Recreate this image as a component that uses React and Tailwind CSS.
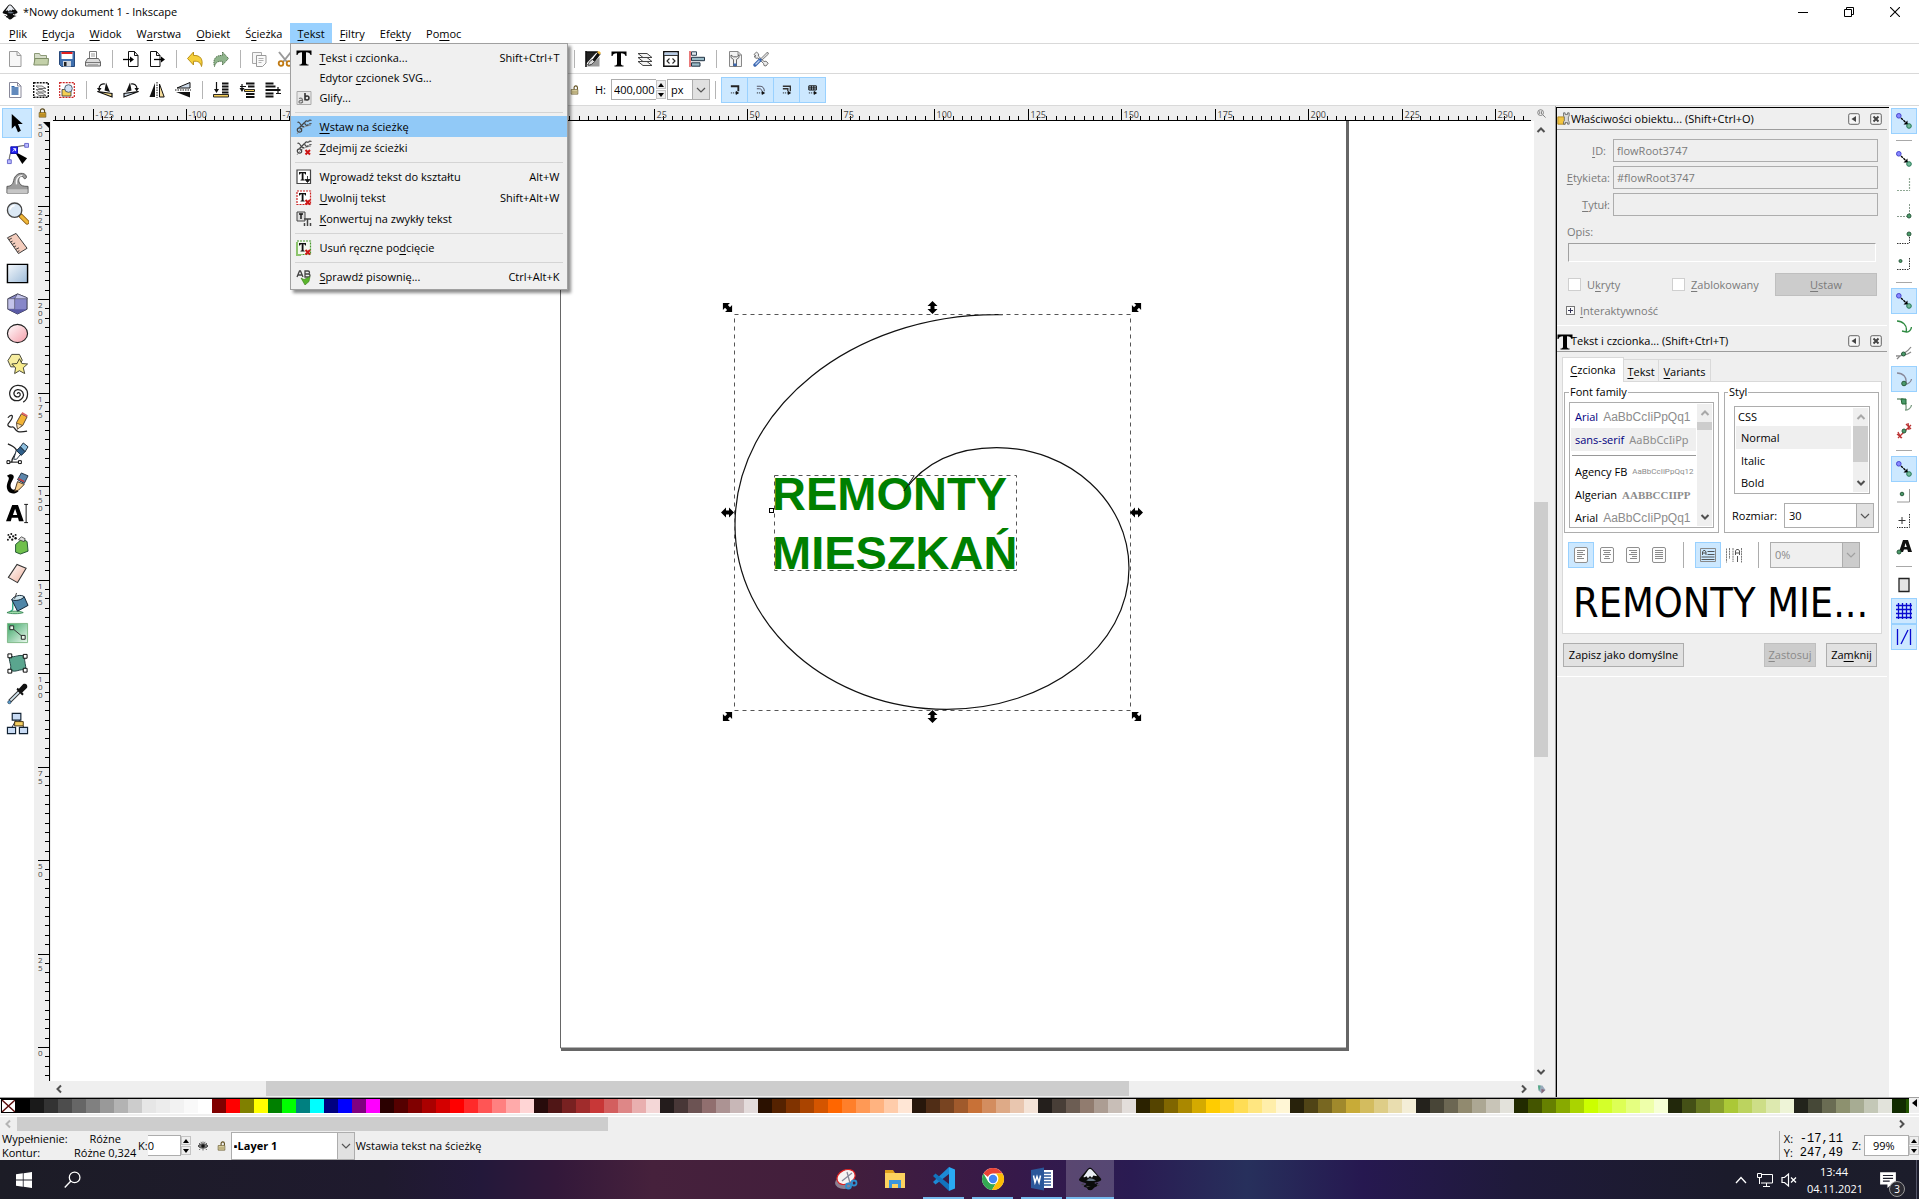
import React from "react";

const SEGOE = "font-['Open_Sans','Noto_Sans',sans-serif]";

/* ---------- small helpers ---------- */

function Svg({ box = 16, className = "w-4 h-4", children }) {
  return (
    <svg viewBox={`0 0 ${box} ${box}`} className={`${className} shrink-0`} fill="none" aria-hidden="true">
      {children}
    </svg>
  );
}

/* "_" marks the mnemonic letter that follows it */
function Mn({ t }) {
  const i = t.indexOf("_");
  if (i < 0) return <span>{t}</span>;
  return (
    <span>
      {t.slice(0, i)}
      <span className="underline underline-offset-2">{t[i + 1]}</span>
      {t.slice(i + 2)}
    </span>
  );
}

function Chevron({ dir = "down", color = "#505050", className = "" }) {
  const d = {
    down: "M1.5 3 5 6.5 8.5 3",
    up: "M1.5 7 5 3.500 8.5 7",
    left: "M7 1.500 3.500 5 7 8.500",
    right: "M3 1.500 6.500 5 3 8.500",
  }[dir];
  return (
    <svg viewBox="0 0 10 10" className={`h-[10px] w-[10px] shrink-0 ${className}`} fill="none" aria-hidden="true">
      <path d={d} stroke={color} strokeWidth="2" />
    </svg>
  );
}

function Combo({ label, value, className = "", textClass = "pl-2", disabled = false, arrow = "w-[18px]" }) {
  return (
    <div className={`relative ${className}`}>
      <select
        aria-label={label}
        disabled={disabled}
        defaultValue={value}
        className={`h-full w-full appearance-none border border-[#adadad] outline-none ${textClass} ${
          disabled ? "bg-[#efefef] text-[#8a8a8a] opacity-100" : "bg-white text-black"
        }`}
      >
        <option>{value}</option>
      </select>
      <span
        className={`pointer-events-none absolute inset-y-0 right-0 flex items-center justify-center border border-[#adadad] ${arrow} ${
          disabled ? "bg-[#cccccc]" : "bg-[#e1e1e1]"
        }`}
      >
        <svg viewBox="0 0 10 10" className="h-[10px] w-[10px]" fill="none" aria-hidden="true">
          <path d="M1 3l4 4 4-4" stroke={disabled ? "#a0a0a0" : "#555"} strokeWidth="1.200" />
        </svg>
      </span>
    </div>
  );
}

function Spin() {
  return (
    <span className="flex w-[10px] flex-col gap-px self-stretch py-px">
      <button aria-label="Więcej" className="flex flex-1 items-center justify-center border border-[#c4c4c4] bg-[#eee]">
        <svg viewBox="0 0 6 4" className="h-1 w-[6px]" aria-hidden="true"><path d="M3 0l3 4H0z" fill="#000" /></svg>
      </button>
      <button aria-label="Mniej" className="flex flex-1 items-center justify-center border border-[#c4c4c4] bg-[#eee]">
        <svg viewBox="0 0 6 4" className="h-1 w-[6px]" aria-hidden="true"><path d="M3 4l3-4H0z" fill="#000" /></svg>
      </button>
    </span>
  );
}

const VSep = ({ className = "" }) => (
  <span className={`flex w-[10px] shrink-0 justify-center ${className}`}>
    <span className="h-[18px] w-px bg-[#b4b4b4]" />
  </span>
);

/* ---------- logos ---------- */

function InkscapeLogo({ className = "h-4 w-4" }) {
  return (
    <svg viewBox="0 0 32 32" className={`${className} shrink-0`} aria-hidden="true">
      <path d="M16 1c1.500 0 2.500.8 3.800 2.200L30 14.500c2.200 2.500.5 4.300-3 5-2.500.6-5 .5-5 1.700 0 1.300 4 1.300 4 3 0 1.600-2.600 2-4.200 3.200-1.300 1-2.400 3.600-5.800 3.600-3.200 0-3-2.600-5-3.600-1.600-.8-3.400-.7-3.400-2 0-1.400 3.400-1.300 3.400-2.700 0-1.700-4-2-6.600-3C1 18.500.5 17 2.600 14.500L12.200 3.200C13.500 1.800 14.500 1 16 1z" fill="#0b0b0b" />
      <path d="M16 2.600c1 0 1.800.6 2.600 1.500l6 6.700c1 1.200.2 1.600-1 1.300l-3-.9-2 3-2.600-2.200-2.800 3-1.800-2.600-2.600 1.200c-1.200.5-2 .1-1-1.200l5.600-8.200C14.200 3.200 15 2.600 16 2.600z" fill="#e9edf3" />
      <path d="M15 15c4 0 7 2 9 3-4 1-9 1-13 0z" fill="#8fa3bb" opacity=".7" />
      <path d="M4 23l3-1 1.500 1-2 1.200zM26 23.500l3 .2-1 1.300-2 .2zM11 25l6 1-5 1z" fill="#444" />
      <path d="M24 21c2 0 3 .4 3 .9s-2 .6-3.500.4z" fill="#0b0b0b" />
    </svg>
  );
}

/* ---------- command bar icons ---------- */

const Ic = {
  fileNew: <Svg><path d="M2.500.500h8l3.500 4v11h-11.500z" fill="#f7f7f7" stroke="#9a9a9a" /><path d="M10 .500v4h4" stroke="#9a9a9a" /></Svg>,
  open: <Svg><path d="M1.500 14V2.500h5l1 2h6V7" fill="#d5dcc8" stroke="#8c9a78" /><path d="M.8 14l1.200-6.500h13.500l-.5 6.500z" fill="#c3d0a9" stroke="#7f8e68" /></Svg>,
  save: <Svg><path d="M.5.500h15v15h-13l-2-2z" fill="#3f6fae" stroke="#27487a" /><path d="M2.500 1h11v7h-11z" fill="#fff" /><path d="M2.500 1h11v2h-11z" fill="#e02020" /><path d="M4 10h8v5.500H4z" fill="#cfd6df" /><path d="M5 11h2.500v4H5z" fill="#222" /></Svg>,
  print: <Svg><path d="M4.500 7V.500h7V7" fill="#fff" stroke="#777" /><path d="M6 3h4M6 5h4" stroke="#999" /><path d="M2.500 7.500h11l2 3.500v4H.5v-4z" fill="#dcdcdc" stroke="#666" /><path d="M1 11.500h14" stroke="#777" /><path d="M3 13.500h10" stroke="#aaa" /></Svg>,
  imp: <Svg><path d="M5.500.500h6l3.500 4v11h-9.500z" fill="#fff" stroke="#111" /><path d="M11.500.500v4h3.500" stroke="#111" /><path d="M0 8.500h8" stroke="#000" strokeWidth="1.300" /><path d="M7 5.500l4 3-4 3z" fill="#000" /></Svg>,
  exp: <Svg><path d="M1.500.500h6l3.500 4v11h-9.500z" fill="#fff" stroke="#111" /><path d="M7.500.500v4h3.500" stroke="#111" /><path d="M5 8.500h8" stroke="#000" strokeWidth="1.300" /><path d="M12 5.500l4 3-4 3z" fill="#000" /></Svg>,
  undo: <Svg><path d="M6.500 1v3.500c7-.5 10 4 8 11-.8-4-3.500-5.700-8-5.200v3.700L.5 7.500z" fill="#f5cf3a" stroke="#b9901a" /></Svg>,
  redo: <Svg><path d="M9.500 1v3.500c-7-.5-10 4-8 11 .8-4 3.500-5.700 8-5.200v3.700l6-6.500z" fill="#8fb48c" stroke="#55754f" strokeDasharray="1.500 .7" /></Svg>,
  copy: <Svg><path d="M1.500 1.500h9v11h-9z" fill="#f6f6f6" stroke="#a8a8a8" /><path d="M5.500 4.500h9.500v7.500l-3.500 3.500h-6z" fill="#fafafa" stroke="#9a9a9a" /><path d="M7.500 7.500h5M7.500 9.500h5M7.500 11.500h3" stroke="#b0b0b0" /></Svg>,
  cut: <Svg><path d="M2 1l8 10M14 1L6 11" stroke="#9a9a9a" strokeWidth="2" /><circle cx="4" cy="12.500" r="2.300" stroke="#c07a14" strokeWidth="1.800" /><circle cx="12" cy="12.500" r="2.300" stroke="#c07a14" strokeWidth="1.800" /></Svg>,
  fill: <Svg><path d="M1 1h11L1 13z" fill="#222" /><path d="M1 1h12M1 0v16" stroke="#111" strokeWidth="1.600" /><path d="M1.500 15.500L14.500 6v9.500z" fill="#9a9a9a" /><path d="M3 13l8-9 3 2.500-7 7z" fill="#fff" /><path d="M2.500 14c1.500-1.500 2-4.500 5-5.500l2 2c-1.500 2.500-4 4-7 3.500z" fill="#ddd" stroke="#111" strokeWidth=".8" /><path d="M7.500 8.500L13 1l2.700 2-5.700 7.500z" fill="#111" /><path d="M12 1l2-1 2 2-1.500 1.800z" fill="#f0b83a" /></Svg>,
  text: <Svg><path d="M.5.500h15v4.500h-1c-.5-2-1.500-2.800-4.500-2.800v10.300c0 1.500.6 2 2.500 2v1h-9v-1c1.900 0 2.500-.5 2.500-2V2.200c-3 0-4 .8-4.500 2.800h-1z" fill="#000" /></Svg>,
  layers: <Svg><path d="M1 10.500h9l5 4H6zM1 6.500h9l5 4H6zM1 2.500h9l5 4H6z" fill="#f3f3f3" stroke="#444" strokeLinejoin="round" /></Svg>,
  xml: <Svg><path d="M.8.800h14.400v14.400H.8z" fill="#fff" stroke="#111" strokeWidth="1.500" /><path d="M1.500 1.500h13v3h-13z" fill="#b5c9e3" /><path d="M1 4.500h14" stroke="#333" /><path d="M6.500 7.500L4 10l2.500 2.500M9.500 7.500L12 10l-2.500 2.500" stroke="#222" strokeWidth="1.100" /></Svg>,
  align: <Svg><path d="M1 0v16" stroke="#d22" strokeWidth="1.200" /><path d="M2.500.800h5v3.500h-5z" fill="#dfe8ee" stroke="#345" /><path d="M2.500 6.300h13v3.400h-13zM2.500 11.800h8.500v3.400h-8.500z" fill="#9bbcc8" stroke="#234" /></Svg>,
  docPrefs: <Svg><path d="M2.500.500h8.500l3.500 3.500v11.500h-12z" fill="#f3f3f3" stroke="#888" /><path d="M11 .500v3.500h3.500" stroke="#888" /><path d="M4 4v2.500l2.500 2V15h3V8.500L12 6.500V4l-2.300 1.800H6.300z" fill="#eee" stroke="#555" strokeWidth=".9" /><path d="M6.500 12.500h3V15h-3z" fill="#3a66b0" /></Svg>,
  prefs: <Svg><path d="M1 3.500L3.500 1l2.200 2-.4 2L11 10.500l2-.3 2.200 2L13 15l-2-.5-.4-2L5 7l-2 .3L1 5.500l2-.5z" fill="#ececec" stroke="#666" strokeWidth=".9" /><path d="M14.500 1L15.500 3 9 9 8 7.500z" fill="#ddd" stroke="#666" strokeWidth=".8" /><path d="M7 9l-5 5" stroke="#3a66b0" strokeWidth="3.400" strokeLinecap="round" /><path d="M6.500 9.500L2.500 13.500" stroke="#bcd0f0" strokeWidth="1.300" /></Svg>,
};

const TC = {
  selAll: <Svg><path d="M2.500.500h8l3.500 3.500v11.500h-11.500z" fill="#fff" stroke="#889" /><path d="M10.500.500v3.500h3.500" stroke="#889" /><path d="M4.500 6h7M4.500 8h7M4.500 10h7M4.500 12h7" stroke="#2f64a8" strokeWidth="1.300" /><path d="M4.500 4h3v1h-3z" fill="#2f64a8" /></Svg>,
  selLayers: <Svg><path d="M.7.700h14.600v14.600H.7z" stroke="#111" strokeWidth="1.400" strokeDasharray="2 1" /><path d="M3 11h6l4 2.500H6zM3 7.500h6l4 2.500H6zM3 4h6l4 2.500H6z" fill="#eee" stroke="#555" strokeWidth=".8" /></Svg>,
  desel: <Svg><path d="M.7.700h14.600v14.600H.7z" stroke="#c22" strokeWidth="1.200" strokeDasharray="2 1" /><path d="M3 7.500h9V14H3z" fill="#f3cf52" stroke="#333" strokeWidth=".8" /><circle cx="9.500" cy="6.500" r="3.800" fill="#cfe0f3" stroke="#456" strokeWidth=".9" /></Svg>,
  rotL: <Svg><path d="M2 7c0-4 3-5.500 6-5" stroke="#111" strokeWidth="1.200" /><path d="M0 6h4.500L2.300 9.500z" fill="#111" /><path d="M9 .500L13 10 7.500 8.500z" fill="#111" /><path d="M.5 9.500l14.500 2v3.500z" fill="#f2d98a" stroke="#111" strokeWidth="1.200" /></Svg>,
  rotR: <Svg><path d="M14 7c0-4-3-5.500-6-5" stroke="#111" strokeWidth="1.200" /><path d="M16 6h-4.500l2.200 3.500z" fill="#111" /><path d="M7 .500L3 10l5.500-1.500z" fill="#111" /><path d="M15.500 9.500L1 11.500v3.500z" fill="#cfdcea" stroke="#111" strokeWidth="1.200" /></Svg>,
  flipH: <Svg><path d="M6 1v14H.5z" fill="#111" /><path d="M8 0v16" stroke="#111" strokeDasharray="1.500 1" /><path d="M10.500 2v13h4.700z" fill="#f5dc9a" stroke="#111" /></Svg>,
  flipV: <Svg><path d="M15 6H2l13-5.500z" fill="#cfdcea" stroke="#111" /><path d="M0 8h16" stroke="#111" strokeDasharray="1.500 1" /><path d="M15 10v5.500L1 10z" fill="#111" /></Svg>,
  lower: <Svg><path d="M9 1.500h6.500M9 4.500h6.500M9 7.500h6.500M9 10.500h6.500" stroke="#111" strokeWidth="2" /><path d="M.5 12.500h15v2.500H.5z" fill="#f4cd5a" stroke="#111" strokeWidth=".9" /><path d="M3.500 0v8" stroke="#111" strokeWidth="1.200" /><path d="M1 7h5l-2.500 4z" fill="#111" /></Svg>,
  lower1: <Svg><path d="M7 1.500h8.500M9 4.500h6.500M7 12h8.500M7 15h8.500" stroke="#111" strokeWidth="2" /><path d="M5.500 7.500h10v2h-10z" fill="#f4cd5a" stroke="#111" strokeWidth=".9" /><path d="M1 4.500h6M3 2v5" stroke="#111" strokeWidth="1.200" /><path d="M.5 6h5L3 10z" fill="#111" /></Svg>,
  raise: <Svg><path d="M.5 1.500h8M.5 4.500h10M.5 11.500h8M.5 14.500h8" stroke="#111" strokeWidth="2" /><path d="M.5 7h15v2H.5z" fill="#111" /><path d="M13 5v7M11 11.500h5" stroke="#111" strokeWidth="1.200" /></Svg>,
  top: <Svg><path d="M.5 5.500h8M.5 8.500h8M.5 11.500h8M.5 14.500h8" stroke="#111" strokeWidth="2" /><path d="M.5.500h15v2.500H.5z" fill="#f4cd5a" stroke="#111" strokeWidth=".9" /></Svg>,
};

const Lock = ({ open }) => (
  <svg viewBox="0 0 10 12" className="h-[10px] w-[9px] shrink-0" fill="none" aria-hidden="true">
    <path d={open ? "M4.500 5.500V3a2 2 0 0 1 4 0V5.500" : "M2.500 6V3.500a2.500 2.500 0 0 1 5 0V6"} stroke="#5b4a1a" strokeWidth="1.300" />
    <path d="M1 5.500h8V11H1z" fill={open ? "#e9e2b8" : "#e3a92a"} stroke="#5b4a1a" strokeWidth=".8" />
    <path d="M2 7.500h6M2 9.300h6" stroke="#7a6120" strokeWidth=".6" />
  </svg>
);

/* scale strokes / corners / gradients / patterns toggles */
const Affect = ({ kind }) => (
  <Svg className="h-[10px] w-[10px]" box={12}>
    {kind === 0 && <path d="M1 1.500h9v6" stroke="#222" strokeWidth="2.200" />}
    {kind === 1 && <path d="M1 1.500h4c3 0 5 2 5 6M1 4.500h3c2 0 3 1 3 3" stroke="#556" strokeWidth="1.200" />}
    {kind === 2 && <path d="M1 1.500h9v6M1 4.500h6v3" stroke="#333" strokeWidth="1.600" />}
    {kind === 3 && <path d="M1 1h9v5H1zM1 3.500h9M4 1v5M7 1v5" stroke="#111" strokeWidth="1.200" />}
    <path d="M1 9.500h6" stroke="#111" strokeDasharray="1.500 1" />
    <path d="M7 7l4 2.500L7 12z" fill="#111" />
  </Svg>
);

/* ---------- toolbox ---------- */

const TOOLS = [
  ["Zaznaczanie", <path key="a" d="M6 2l11.500 10.500h-5l3 7-3 1.500-3-7L6 17.500z" fill="#000" />],
  ["Edycja węzłów", <g key="a"><path d="M3.500 20C3 10 8 4 20 3.500" stroke="#777" strokeWidth="1.300" /><path d="M9 10l13 7-5 6z" fill="#000" /><path d="M5 5h7v7H5z" fill="#2222f0" stroke="#11a" /><path d="M7 10l3-3M7.500 7H10v2.500" stroke="#fff" /><path d="M1.500 18.500h4v4h-4zM19.500 1.500h4v4h-4z" fill="#bbf" stroke="#66c" /></g>],
  ["Ulepszanie", <g key="a"><path d="M1 22v-7c3 0 6-1 7-6C9 3 14 0 19 2c3 1.500 3 5 .5 5-1.500 0-1-2.500-3-2.500-3 0-4 4-2.500 7 1.500 3 4 3.500 9 3.500v7z" fill="#9c9c9c" stroke="#555" /><path d="M1.500 18h21v4h-21z" fill="#c6c6c6" /><path d="M11 13c-1-5 1-9 6-9.500" stroke="#f4f4f4" strokeWidth="1.500" /></g>],
  ["Powiększenie", <g key="a"><path d="M15 14l7 7" stroke="#8a5a10" strokeWidth="5" strokeLinecap="round" /><path d="M16 15l6 6" stroke="#f0b83a" strokeWidth="3" strokeLinecap="round" /><circle cx="9" cy="8.500" r="7.500" fill="#dce9f5" stroke="#444" strokeWidth="1.400" /><path d="M4.500 8A4.500 4.500 0 0 1 9 4" stroke="#fff" strokeWidth="1.500" /></g>],
  ["Pomiar", <g key="a"><path d="M1.500 6l9-4.500 11.500 15.500-9 5.500z" fill="#f4cdbd" stroke="#333" /><path d="M3 8l3-1.500M4.800 10.500l2-1M6.500 13l3-1.500M8.500 15.500l2-1M10.500 18l3-1.500M12 20.500l2-1" stroke="#333" /></g>],
  ["Prostokąt", <path key="a" d="M1.500 2.500h21v19h-21z" fill="url(#blueGrad)" stroke="#000" strokeWidth="1.500" />],
  ["Obiekt 3D", <g key="a"><path d="M2 7l10-5 10 4v12l-10 5-10-5z" fill="#8787c9" stroke="#334" /><path d="M2 7l7 0v11L2 18zM9 7l3-5 10 4v1z" fill="#c3c3ea" stroke="#445" strokeWidth=".6" /><path d="M9 18l13 0-10 5-10-5z" fill="#5a5aa5" /></g>],
  ["Elipsa", <ellipse key="a" cx="12" cy="12" rx="10.500" ry="9.500" fill="url(#pinkGrad)" stroke="#222" strokeWidth="1.200" />],
  ["Gwiazda", <g key="a"><path d="M2 9l4-6.500h8l3 6-4 7H5z" fill="#f6eda0" stroke="#443" /><path d="M14 7l2.500 5 6 .5-4.500 4 1.500 6-5.500-3-5 3 1-6-4-4 5.500-.5z" fill="#f8ec8c" stroke="#443" /></g>],
  ["Spirala", <path key="a" d="M12 12.500c-.5-1.500 2.200-2 2.800 0 .6 2.500-2.600 4-4.800 2.500C7 13 8 8.500 12 8c5-.4 7.500 4.500 5.500 8-3 5-10.500 4.500-12.800-.2C2 10 6 4 12 3.500c6-.3 10.500 3.500 10.500 9 0 4-2 7-4.500 8.500" stroke="#222" strokeWidth="1.300" />],
  ["Ołówek", <g key="a"><path d="M2 6c3-4 6-3 4 1S0 13 3 15s4-1 6 2 3 5 13 3" stroke="#222" strokeWidth="1.300" /><path d="M11 11L16 2l6 3-4.500 9-5.500 3.500z" fill="#f3b436" stroke="#543" /><path d="M11 11.500l6 2.500-5 4z" fill="#fbe3b5" stroke="#543" strokeWidth=".8" /><path d="M16 2l6 3 .7-1.500L17 0z" fill="#d66" /></g>],
  ["Pióro", <g key="a"><path d="M2 2c4 2 8 3 9 7 0 4-5 6-5 12" stroke="#222" strokeWidth="1.300" /><path d="M8 18l3-10 5 4-5 6z" fill="#fff" stroke="#234" /><path d="M11 9l4-4 5 5-4 4z" fill="#2f5f8a" stroke="#123" /><path d="M15 5l3-4 5 4-3 5z" fill="#8fc0e0" stroke="#123" /><path d="M4 21h10" stroke="#000" /><path d="M1 19.500h3v3H1zM13 19.500h3v3h-3z" fill="#fff" stroke="#000" /></g>],
  ["Kaligrafia", <g key="a"><path d="M1 4c3-3 8-2 7 2-1 3-4 6-3 10 1 3 4 3 6 1l2 3c-4 4-11 3-12-3C0 11 5 7 2 5z" fill="#000" /><path d="M9 20l3-10 7 3-6 6z" fill="#f7cf8a" stroke="#432" /><path d="M12 8l4-7 7 3-4 8z" fill="#5d86ab" stroke="#234" /><path d="M13 7l6 3" stroke="#c33" strokeWidth="1.500" /></g>],
  ["Tekst", <g key="a"><path d="M6.500 3h6l6 17h-5l-1-3.500H6L5 20H0zM9.500 7l-2.300 6.500h4.500z" fill="#000" fillRule="evenodd" /><path d="M19 2.500h4M21 2.500v19M19 21.500h4" stroke="#111" /></g>],
  ["Sprej", <g key="a"><path d="M10 13l7-6 5 3 1 10-8 3-5-2z" fill="#6fc04c" stroke="#253" /><path d="M13 8l3-3 4 2-1 3z" fill="#ddd" stroke="#333" strokeWidth=".8" /><g fill="#111"><circle cx="2.500" cy="3" r="1" /><circle cx="5.500" cy="2" r="1" /><circle cx="4" cy="5.500" r="1.200" /><circle cx="7.500" cy="4.500" r="1.200" /><circle cx="2" cy="8" r="1" /><circle cx="6.500" cy="8" r="1.200" /><circle cx="10" cy="6.500" r="1.300" /><circle cx="10" cy="3" r="1" /></g></g>],
  ["Gumka", <path key="a" d="M2.500 16L11.500 2.500l9.500 4-9 15z" fill="url(#pinkGrad2)" stroke="#333" strokeWidth="1.100" />],
  ["Wiadro", <g key="a"><path d="M4 21c2-2 3-2 3-3s0-8 1-11" stroke="#3a8" strokeWidth="1.500" /><path d="M1 21.500c3-2 14-2 17 0-3 1.500-14 1.500-17 0z" fill="#9cdca8" stroke="#274" strokeWidth=".8" /><path d="M6 8l13-3 4 9-11 6z" fill="#4f86a8" stroke="#123" /><path d="M6 8c2-4 10-6 13-3-2 3-9 5-13 3z" fill="#cfe6ee" stroke="#123" /><path d="M9 7l2-6" stroke="#333" /></g>],
  ["Gradient", <g key="a"><path d="M1.500 1.500h21v20h-21z" fill="url(#greenGrad)" stroke="#7fb887" /><path d="M6 6l12 10" stroke="#333" /><path d="M4 4h4v4H4zM16 14h4v4h-4z" fill="#e8f6ea" stroke="#222" /></g>],
  ["Siatka gradientu", <g key="a"><path d="M4 4c5 3 10-3 16 1-2 5 2 9 0 14-6-2-9 3-16 0 3-5-2-9 0-15z" fill="#5aa58e" stroke="#244" /><path d="M2 2h4v4H2zM18 2.500h4v4h-4zM2 18h4v4H2zM18 17h4v4h-4z" fill="#fff" stroke="#000" /></g>],
  ["Pipeta", <g key="a"><path d="M4 20l10-10" stroke="#333" strokeWidth="4" /><path d="M4.500 19.500l9-9" stroke="#d4e6f0" strokeWidth="2" /><path d="M11 8l6 6 1.500-1.500L17 11l5-5c1-3-1-5-4-4l-4.500 5L12 6z" fill="#111" /><circle cx="3.500" cy="21" r="1.700" fill="#5a9fd0" stroke="#234" strokeWidth=".6" /></g>],
  ["Łącznik", <g key="a"><path d="M12 6L5 18M12 6l8 12" stroke="#223" /><path d="M6.500 1.500h9v7h-9zM1.500 16h8.500v6.500H1.500zM14 16h8.500v6.500H14z" fill="#c9dcf5" stroke="#123" strokeWidth="1.200" /><path d="M9 10h9v4.500H9z" fill="#f5cf62" stroke="#431" /></g>],
];

function Toolbox() {
  return (
    <nav aria-label="Narzędzia" className="flex w-[34px] shrink-0 flex-col items-center bg-white pt-[2px]">
      <svg className="absolute h-0 w-0" aria-hidden="true">
        <defs>
          <linearGradient id="blueGrad" x1="0" y1="0" x2="1" y2="1"><stop offset="0" stopColor="#f4f8fc" /><stop offset="1" stopColor="#9dbbd9" /></linearGradient>
          <linearGradient id="pinkGrad" x1="0" y1="0" x2="1" y2="1"><stop offset="0" stopColor="#fff" /><stop offset="1" stopColor="#f59ca8" /></linearGradient>
          <linearGradient id="pinkGrad2" x1="0" y1="0" x2="1" y2="1"><stop offset="0" stopColor="#fff" /><stop offset="1" stopColor="#f0b09c" /></linearGradient>
          <linearGradient id="greenGrad" x1="0" y1="0" x2="1" y2="1"><stop offset="0" stopColor="#3aa565" /><stop offset="1" stopColor="#effaf1" /></linearGradient>
        </defs>
      </svg>
      {TOOLS.map(([name, art], i) => (
        <button
          key={name}
          aria-label={name}
          className={`flex h-[30px] w-[30px] items-center justify-center ${i === 0 ? "border border-[#99d1ff] bg-[#cce8ff]" : ""}`}
        >
          <Svg box={24} className="h-[23px] w-[23px]">{art}</Svg>
        </button>
      ))}
    </nav>
  );
}

/* ---------- menu ---------- */

const glyph = (extra) => (
  <g>
    <path d="M1 15c3-5 5-7 14-9" stroke="#888" strokeWidth=".9" />
    <circle cx="3.500" cy="11" r="2.200" stroke="#444" strokeWidth="1.200" />
    <path d="M1.500 3.500c1.500-1 2.500 1 3.500 2.500s2 2 3 1.500M8.500 3.500L3.500 8.500" stroke="#444" strokeWidth="1.200" />
    <path d="M12 2.500c-2-1.500-4 .5-3 2.500s2.500 1.500 3.500.5M15.500 1.500c-2-1-3 0-2.700 1.200M13 5l2.500-.5" stroke="#444" strokeWidth="1.200" />
    {extra}
  </g>
);
const redX = <path d="M9.500 10l4.500 4.500M14 10l-4.500 4.500" stroke="#cc1414" strokeWidth="2" />;
const T_PATH = "M3 3h7v2.500h-.8C9 4.500 8.500 4.200 7.500 4.200v5.600c0 .7.400 1 1.200 1v.7H4.500v-.7c.8 0 1.200-.3 1.200-1V4.200c-1 0-1.500.3-1.700 1.300H3z";

const MENU = [
  { t: "_Tekst i czcionka...", k: "Shift+Ctrl+T", icon: Ic.text },
  { t: "Edytor _czcionek SVG...", small: true },
  { t: "Glify...", icon: <Svg><path d="M1 1.500h14v13H1z" fill="#e8e8e8" stroke="#aaa" /><path d="M3 8.500c2-1 3.500 0 3.500 1.500v3M6.500 10.500c-4-.5-4.500 2.500-2 2.500 1 0 2-1 2-1" stroke="#777" strokeWidth="1.200" /><path d="M9 3v7.500M9 7c1-1.500 4-1.500 4 1s-3 2.500-4 1" stroke="#333" strokeWidth="1.600" /></Svg> },
  null,
  { t: "_Wstaw na ścieżkę", sel: true, icon: <Svg>{glyph(null)}</Svg> },
  { t: "_Zdejmij ze ścieżki", icon: <Svg>{glyph(redX)}</Svg> },
  null,
  { t: "W_prowadź tekst do kształtu", k: "Alt+W", icon: <Svg><path d="M1 1h13.500v13.500H1z" fill="#fff" stroke="#444" strokeWidth="1.200" /><path d={T_PATH} fill="#111" /><path d="M11.500 7v6M9 10.500h5l-2.500 3z" stroke="#111" fill="#111" strokeWidth=".8" /></Svg> },
  { t: "_Uwolnij tekst", k: "Shift+Alt+W", icon: <Svg><path d="M1 1h13.500v13.500H1z" fill="#fff" stroke="#c22" strokeWidth="1.200" strokeDasharray="2 1" /><path d={T_PATH} fill="#111" />{redX}</Svg> },
  { t: "_Konwertuj na zwykły tekst", icon: <Svg><path d="M1 1h8v9H1z" fill="#ddd" stroke="#444" /><path d="M3 3h4M5 3v5" stroke="#111" strokeWidth="1.400" /><path d="M8 8h7M11.500 8v7M8.500 12v3M14.500 12v3" stroke="#444" strokeWidth="1.500" /></Svg> },
  null,
  { t: "Usuń ręczne po_dcięcie", icon: <Svg><path d="M1 1h13.500v13.500H1z" fill="#f3f9ee" stroke="#489a2c" strokeWidth="1.200" strokeDasharray="2 1" /><path d="M1 2v13h4" stroke="#8cc46c" strokeWidth="2" /><path d={T_PATH} fill="#111" />{redX}</Svg> },
  null,
  { t: "_Sprawdź pisownię...", k: "Ctrl+Alt+K", icon: <Svg><path d="M1 8l2.500-6h1L7 8M2 6h4M9 8V2h3c2 0 2 2.800 0 3H9h3.500c2 0 2 3 0 3z" stroke="#444" strokeWidth="1.300" /><path d="M5 9l3 1.500 6-3-1 5-4 3.500z" fill="#5ab52c" stroke="#387a18" strokeWidth=".6" /></Svg> },
];

function TextMenu() {
  return (
    <div role="menu" className="absolute left-0 top-full z-20 w-[278px] border border-[#a0a0a0] bg-[#f0f0f0] pb-[2px] pt-[3px] shadow-[3px_3px_3px_rgba(0,0,0,0.45)]">
      {MENU.map((m, i) =>
        m === null ? (
          <div key={i} role="separator" className="flex h-2 items-center px-1">
            <div className="h-px flex-1 bg-[#d4d4d4]" />
          </div>
        ) : (
          <button
            key={i}
            role="menuitem"
            className={`flex w-full items-center pl-[6px] pr-2 ${m.small ? "h-[19px]" : "h-[21px]"} ${m.sel ? "bg-[#91c9f7]" : ""}`}
          >
            <span className="flex w-[22px] justify-start">
              {m.icon ? <span className="flex h-[14px] w-[14px] items-center justify-center">{m.icon}</span> : null}
            </span>
            <Mn t={m.t} />
            <span className="ml-auto">{m.k}</span>
          </button>
        )
      )}
    </div>
  );
}

const MENUBAR = ["_Plik", "_Edycja", "_Widok", "W_arstwa", "_Obiekt", "Ś_cieżka", "_Tekst", "_Filtry", "Efe_kty", "Po_moc"];

function Header() {
  return (
    <header className="bg-white">
      <div className="flex h-[23px] items-center pl-[2px]">
        <InkscapeLogo className="h-4 w-4" />
        <h1 className="pl-[5px]">*Nowy dokument 1 - Inkscape</h1>
        <div className="ml-auto flex gap-9 pr-[19px]">
          <button aria-label="Minimalizuj"><Svg box={10} className="h-[10px] w-[10px]"><path d="M0 5.500h10" stroke="#000" /></Svg></button>
          <button aria-label="Przywróć"><Svg box={10} className="h-[10px] w-[10px]"><path d="M.5 2.500h7v7h-7zM2.500 2.500v-2h7v7h-2" stroke="#000" /></Svg></button>
          <button aria-label="Zamknij okno"><Svg box={10} className="h-[10px] w-[10px]"><path d="M0 0l10 10M10 0L0 10" stroke="#000" strokeWidth="1.100" /></Svg></button>
        </div>
      </div>
      <div role="menubar" className="flex h-[21px] gap-px border-b border-[#d9d9d9] pl-[2px]">
        {MENUBAR.map((m) => (
          <div key={m} className="relative">
            <button role="menuitem" className={`h-[21px] px-[7px] ${m === "_Tekst" ? "bg-[#99d1ff]" : ""}`}>
              <Mn t={m} />
            </button>
            {m === "_Tekst" && <TextMenu />}
          </div>
        ))}
      </div>
    </header>
  );
}

function IconBtn({ label, children, className = "" }) {
  return (
    <button aria-label={label} className={`flex h-[26px] w-[26px] shrink-0 items-center justify-center ${className}`}>
      {children}
    </button>
  );
}

function CommandBar() {
  const g = (list) => list.map(([l, ic]) => <IconBtn key={l} label={l}>{ic}</IconBtn>);
  return (
    <div role="toolbar" aria-label="Polecenia" className="flex h-[30px] items-center border-b border-[#d9d9d9] bg-white pl-[2px]">
      {g([["Nowy", Ic.fileNew], ["Otwórz", Ic.open], ["Zapisz", Ic.save], ["Drukuj", Ic.print]])}
      <VSep className="mx-px" />
      {g([["Importuj", Ic.imp], ["Eksportuj", Ic.exp]])}
      <VSep className="mx-px" />
      {g([["Cofnij", Ic.undo], ["Przywróć", Ic.redo]])}
      <VSep className="mx-px" />
      {g([["Kopiuj", Ic.copy], ["Wytnij", Ic.cut]])}
      <span className="w-[270px] shrink-0" />
      <VSep className="mx-px" />
      {g([["Wypełnienie i kontur", Ic.fill], ["Tekst i czcionka", Ic.text], ["Warstwy", Ic.layers], ["Edytor XML", Ic.xml], ["Wyrównaj", Ic.align]])}
      <VSep className="mx-px" />
      {g([["Ustawienia dokumentu", Ic.docPrefs], ["Preferencje", Ic.prefs]])}
    </div>
  );
}

function ToolControls() {
  const g = (list) => list.map(([l, ic]) => <IconBtn key={l} label={l}>{ic}</IconBtn>);
  return (
    <div role="toolbar" aria-label="Opcje narzędzia" className="flex h-8 items-center border-b border-[#d9d9d9] bg-white pl-[2px]">
      {g([["Zaznacz wszystko", TC.selAll], ["Zaznacz na warstwach", TC.selLayers], ["Odznacz", TC.desel]])}
      <VSep className="mx-px" />
      {g([["Obróć w lewo", TC.rotL], ["Obróć w prawo", TC.rotR], ["Odbij poziomo", TC.flipH], ["Odbij pionowo", TC.flipV]])}
      <VSep className="mx-px" />
      {g([["Na spód", TC.lower], ["Niżej", TC.lower1], ["Wyżej", TC.raise], ["Na wierzch", TC.top]])}
      <span className="w-[258px] shrink-0" />
      <button aria-label="Zablokuj proporcje"><Lock open /></button>
      <label htmlFor="sel-h" className="ml-4 w-4">H:</label>
      <span className="flex h-[21px]">
        <input id="sel-h" defaultValue="400,000" className="h-full w-[45px] border border-r-0 border-[#adadad] bg-white pl-[2px] outline-none" />
        <Spin />
      </span>
      <Combo label="Jednostka" value="px" className="ml-px h-[21px] w-[43px]" textClass="pl-[3px]" />
      <VSep />
      <span className="ml-px flex">
        {[0, 1, 2, 3].map((k) => (
          <IconBtn key={k} label={`Skalowanie ${k + 1}`} className="-mr-px w-[27px] border border-[#99d1ff] bg-[#cce8ff]">
            <Affect kind={k} />
          </IconBtn>
        ))}
      </span>
    </div>
  );
}

/* ---------- canvas ---------- */

const PX_PER_MM = 3.74;
const range = (a, b, s) => Array.from({ length: Math.floor((b - a) / s) + 1 }, (_, i) => a + i * s);

function HRuler() {
  const x = (mm) => Math.round(526 + mm * PX_PER_MM) + 0.5;
  return (
    <svg className="h-[15px] w-full bg-[#efefef]" aria-hidden="true">
      <path d="M19 14.500H1497" stroke="#000" strokeWidth="1" />
      {range(-135, 257.5, 2.5).map((mm) => (
        <path key={mm} d={`M${x(mm)} ${mm % 25 === 0 ? 3 : 10}V15`} stroke="#000" />
      ))}
      {range(-125, 250, 25).map((mm) => (
        <text key={mm} x={x(mm) + 2} y="12" fontSize="9" fill="#444">{mm}</text>
      ))}
    </svg>
  );
}

function VRuler() {
  const y = (mm) => Math.round(926 - mm * PX_PER_MM) + 0.5;
  const digits = range(0, 250, 25).flatMap((mm) =>
    String(mm).split("").map((c, i) => ({ k: `${mm}-${i}`, c, y: y(mm) + 8 + i * 8 }))
  );
  return (
    <svg className="h-full w-[17px] bg-[#efefef]" aria-hidden="true">
      <path d="M15.500 1V960" stroke="#000" />
      <path d="M9 1h6v6z" fill="#000" />
      {range(-7.5, 245, 2.5).map((mm) => (
        <path key={mm} d={`M${mm % 25 === 0 ? 4 : 11} ${y(mm)}H15`} stroke="#000" />
      ))}
      {digits.filter((d) => d.y > 6).map((d) => (
        <text key={d.k} x="4" y={d.y} fontSize="8" fill="#444">{d.c}</text>
      ))}
    </svg>
  );
}

/* double-headed scale arrow, rotated for each side of the selection */
const Handle = ({ x, y, r }) => (
  <path transform={`translate(${x} ${y}) rotate(${r})`} d="M0-6.500L5-1.500H2v3h3L0 6.500l-5-5h3v-3h-3z" fill="#000" />
);

function Canvas() {
  return (
    <svg className="min-w-0 flex-1 bg-white" aria-label="Obszar roboczy">
      <path d="M509.500 -5V927H1295" stroke="#666" fill="none" />
      <path d="M1296.500 -5V928.500H510" stroke="#666" strokeWidth="3" fill="none" />
      <g transform="translate(649 169) scale(0.333333)" fill="none" stroke="#111" strokeWidth="3.600">
        <path d="M908 74H890C456 74 105 356 105 705C105 1010 389 1258 740 1258C1042 1258 1287 1069 1287 835C1287 635 1109 473 890 473C780 473 680 510 612 603" />
      </g>
      <g fill="none" stroke="#555" strokeDasharray="4 4">
        <rect x="683.500" y="193.500" width="396" height="396" />
      </g>
      <text x="721" y="389" fontFamily="Liberation Sans, Arial, sans-serif" fontWeight="700" fontSize="47" fill="#008000">REMONTY</text>
      <text x="721" y="448" fontFamily="Liberation Sans, Arial, sans-serif" fontWeight="700" fontSize="47" fill="#008000">MIESZKAŃ</text>
      <path d="M853 370l10-15" stroke="#111" />
      <rect x="723.500" y="354.500" width="242" height="95" fill="none" stroke="#555" strokeDasharray="4 4" />
      <rect x="718.500" y="387.500" width="4" height="4" fill="#fff" stroke="#000" />
      <Handle x={676.5} y={186.5} r={-45} />
      <Handle x={881.5} y={186.5} r={0} />
      <Handle x={1085.5} y={186.5} r={45} />
      <Handle x={676.5} y={391.5} r={90} />
      <Handle x={1085.5} y={391.5} r={90} />
      <Handle x={676.5} y={595.5} r={45} />
      <Handle x={881.5} y={595.5} r={0} />
      <Handle x={1085.5} y={595.5} r={-45} />
    </svg>
  );
}

function Workspace() {
  return (
    <main className="flex min-w-0 flex-1 flex-col bg-[#efefef]">
      <div className="relative flex h-[15px]">
        <HRuler />
        <span className="absolute left-1 top-[2px]"><Lock /></span>
        <span className="flex w-[21px] shrink-0 items-center pl-[3px]">
          <Svg box={10} className="h-[9px] w-[9px]"><circle cx="4" cy="4" r="3.200" stroke="#777" /><path d="M3 2.500v3M5 2.500v3M6.500 6.500l3 3" stroke="#777" /></Svg>
        </span>
      </div>
      <div className="flex min-h-0 flex-1">
        <VRuler />
        <Canvas />
        <div className="flex w-[21px] flex-col items-center pr-[7px]">
          <button aria-label="W górę" className="mt-1"><Chevron dir="up" /></button>
          <span className="mt-[367px] h-[255px] w-[14px] bg-[#cdcdcd]" />
          <button aria-label="W dół" className="mb-1 mt-auto"><Chevron /></button>
        </div>
      </div>
      <div className="mb-px flex h-[15px] items-center">
        <button aria-label="W lewo" className="ml-5"><Chevron dir="left" /></button>
        <span className="ml-[202px] h-[15px] w-[863px] bg-[#cdcdcd]" />
        <button aria-label="W prawo" className="ml-auto mr-2"><Chevron dir="right" /></button>
        <span className="mr-[9px] flex">
          <Svg box={10} className="h-[10px] w-[9px]"><path d="M1 1l5 0 3.500 5-4 4L2 7z" fill="#9ab" /><path d="M1 1l3 0-1 5-1 1z" fill="#5a8" /><path d="M5 5l4 1-4 4z" fill="#867" /></Svg>
        </span>
      </div>
    </main>
  );
}

/* ---------- dock ---------- */

function PanelHeader({ icon, title }) {
  return (
    <div className="flex h-[22px] items-center border-b border-[#9c9c9c] text-black">
      {icon}
      <h2 className="pl-px">{title}</h2>
      <span className="ml-auto flex gap-[10px] pr-[5px]">
        <button aria-label="Minimalizuj panel"><Svg box={12} className="h-3 w-3"><rect x=".7" y=".7" width="10.600" height="10.600" rx="1.500" fill="#f6f6f6" stroke="#666" /><path d="M8 3v6L3.500 6z" fill="#444" /></Svg></button>
        <button aria-label="Zamknij panel"><Svg box={12} className="h-3 w-3"><rect x=".7" y=".7" width="10.600" height="10.600" rx="1.500" fill="#f6f6f6" stroke="#666" /><path d="M3.500 3.500l5 5M8.500 3.500l-5 5" stroke="#444" strokeWidth="2" /></Svg></button>
      </span>
    </div>
  );
}

function ObjectProperties() {
  const rows = [["_ID:", "flowRoot3747", "obj-id"], ["_Etykieta:", "#flowRoot3747", "obj-label"], ["_Tytuł:", "", "obj-title"]];
  return (
    <section className="border-b border-white text-[#7a7a7a]">
      <PanelHeader
        title="Właściwości obiektu... (Shift+Ctrl+O)"
        icon={<Svg className="h-[13px] w-[13px]"><path d="M1 6h9v9H1z" fill="#f3c53f" stroke="#a8801c" /><path d="M8 1h2v2h3V1h2v4l-1 1v5l1 1v3h-2v-2h-3v2H8v-3l1-1V6L8 5z" fill="#d9d9d9" stroke="#555" strokeWidth=".9" /></Svg>}
      />
      <div className="flex flex-col gap-1 pl-[9px] pr-[9px] pt-[9px]">
        {rows.map(([l, v, id]) => (
          <div key={id} className="flex h-[23px] items-center">
            <label htmlFor={id} className={`w-[44px] whitespace-nowrap text-right ${id === "obj-id" ? "pr-1" : ""}`}><Mn t={l} /></label>
            <input id={id} disabled defaultValue={v} className="ml-[3px] h-full min-w-0 flex-1 border border-[#adadad] bg-[#efefef] pl-[3px]" />
          </div>
        ))}
      </div>
      <div className="flex h-[27px] items-center pl-[10px] pt-1"><label htmlFor="obj-desc">Opis:</label></div>
      <div className="pl-[11px] pr-[11px]">
        <textarea id="obj-desc" disabled className="block h-[19px] w-full resize-none border border-b-white border-l-[#a0a0a0] border-r-white border-t-[#a0a0a0] bg-[#efefef]" />
      </div>
      <div className="flex items-center pl-[11px] pr-[10px] pt-[11px]">
        <label className="flex w-[104px] items-center gap-[6px]">
          <input type="checkbox" disabled className="h-[13px] w-[13px] appearance-none border border-[#cfcfcf] bg-white" />
          <Mn t="U_kryty" />
        </label>
        <label className="flex items-center gap-[6px]">
          <input type="checkbox" disabled className="h-[13px] w-[13px] appearance-none border border-[#cfcfcf] bg-white" />
          <Mn t="_Zablokowany" />
        </label>
        <button disabled className="ml-auto h-[23px] w-[102px] border border-[#bfbfbf] bg-[#cccccc]"><Mn t="_Ustaw" /></button>
      </div>
      <button className="flex h-[29px] items-center gap-[5px] pl-[9px]">
        <Svg box={9} className="h-[9px] w-[9px]"><rect x=".5" y=".5" width="8" height="8" fill="#fafafa" stroke="#777" /><path d="M2 4.500h5M4.500 2v5" stroke="#335" /></Svg>
        <Mn t="_Interaktywność" />
      </button>
    </section>
  );
}

const Legend = ({ className = "", children }) => <legend className={`px-px leading-3 ${className}`}>{children}</legend>;

function ListScroll({ thumb }) {
  return (
    <span className="flex w-[15px] shrink-0 flex-col items-center bg-[#efefef]">
      <Chevron dir="up" color="#a8a8a8" className="my-1" />
      <span className={`w-full bg-[#cdcdcd] ${thumb}`} />
      <Chevron className="mb-1 mt-auto" />
    </span>
  );
}

const FONTS = [
  { n: "Arial", used: true, s: "AaBbCcIiPpQq1", f: "font-['Liberation_Sans',sans-serif] text-[12px]" },
  { n: "sans-serif", used: true, sel: true, s: "AaBbCcIiPp", f: "font-['Noto_Sans',sans-serif] text-[11px]" },
  { n: "Agency FB", s: "AaBbCcIiPpQq12", f: "font-['Roboto',sans-serif] text-[8px]" },
  { n: "Algerian", s: "AABBCCIIPP", f: "font-['Liberation_Serif',serif] font-bold text-[11px]" },
  { n: "Arial", s: "AaBbCcIiPpQq1", f: "font-['Liberation_Sans',sans-serif] text-[12px]" },
];

/* x range of each of the five text lines, per alignment */
const LINES = [
  [[4, 12], [4, 10], [4, 12], [4, 9], [4, 11]],
  [[4, 12], [5, 11], [4, 12], [6, 10], [5, 11]],
  [[4, 12], [6, 12], [4, 12], [7, 12], [5, 12]],
  [[4, 12], [4, 12], [4, 12], [4, 12], [4, 12]],
];
function JustifyIcon({ kind }) {
  return (
    <Svg className="h-4 w-4">
      <rect x="1.500" y=".5" width="13" height="15" rx="1.500" fill="#fdfdfd" stroke="#8f8f8f" />
      {LINES[kind].map(([a, b], i) => <path key={i} d={`M${a} ${3.5 + i * 2}H${b}`} stroke="#8a8a8a" />)}
    </Svg>
  );
}

function TextAndFont() {
  return (
    <section className="flex flex-col border-b border-white pt-1">
      <PanelHeader title="Tekst i czcionka... (Shift+Ctrl+T)" icon={<span className="flex h-[13px] w-[13px]">{Ic.text}</span>} />
      <div className="pl-[5px] pr-[5px] pt-[5px]">
        <div role="tablist" className="flex h-6 items-end">
          <button role="tab" aria-selected="true" className="relative -mb-px h-[25px] w-[62px] border border-b-0 border-[#d9d9d9] bg-white"><Mn t="_Czcionka" /></button>
          <button role="tab" className="h-[22px] w-[35px] border border-b-0 border-l-0 border-[#d9d9d9] pt-[2px]"><Mn t="_Tekst" /></button>
          <button role="tab" className="h-[22px] w-[52px] border border-b-0 border-l-0 border-[#d9d9d9] pt-[2px]"><Mn t="_Variants" /></button>
        </div>
        <div className="border border-[#d9d9d9] bg-white pb-1 pl-px pr-[2px] pt-1">
          <div className="grid grid-cols-2 gap-[5px]">
            <fieldset className="h-[147px] min-w-0 border border-[#adadad] px-1">
              <Legend>Font family</Legend>
              <div className="mt-1 flex h-[126px] border border-[#adadad] bg-white p-px">
                <ul className="min-w-0 flex-1 pr-px pt-px">
                  {FONTS.map((f, i) => (
                    <React.Fragment key={i}>
                      <li className={`flex h-[23px] items-center gap-[5px] overflow-hidden whitespace-nowrap pl-1 ${f.sel ? "bg-[#efefef]" : ""}`}>
                        <span className={f.used ? "text-[#000080]" : "text-black"}>{f.n}</span>
                        <span className={`text-[#8c8c8c] ${f.f}`}>{f.s}</span>
                      </li>
                      {i === 1 && <li className="flex h-[9px] items-center pl-px"><span className="h-px flex-1 bg-[#999]" /></li>}
                    </React.Fragment>
                  ))}
                </ul>
                <ListScroll thumb="h-2" />
              </div>
            </fieldset>
            <fieldset className="h-[147px] min-w-0 border border-[#adadad] pl-[9px] pr-1">
              <Legend className="-ml-[6px]">Styl</Legend>
              <div className="mr-[4px] mt-2 flex h-[88px] border border-[#adadad] bg-white p-px">
                <ul className="min-w-0 flex-1 overflow-hidden pr-[2px]">
                  <li className="flex h-[18px] items-center pl-[2px]">CSS</li>
                  <li className="flex h-[23px] items-center bg-[#efefef] pl-[5px]">Normal</li>
                  <li className="flex h-[23px] items-center pl-[5px]">Italic</li>
                  <li className="flex h-[22px] items-center pl-[5px]">Bold</li>
                </ul>
                <ListScroll thumb="h-9" />
              </div>
              <div className="-ml-[2px] mt-[9px] flex items-center">
                <span className="flex-1">Rozmiar:</span>
                <Combo label="Rozmiar" value="30" className="h-[25px] w-[90px]" textClass="pl-1" />
              </div>
            </fieldset>
          </div>
          <div className="mt-[9px] flex h-[26px] items-center pl-1">
            {[0, 1, 2, 3].map((k) => (
              <IconBtn key={k} label={["Do lewej", "Do środka", "Do prawej", "Wyjustuj"][k]} className={k === 0 ? "border border-[#99d1ff] bg-[#cce8ff]" : ""}>
                <JustifyIcon kind={k} />
              </IconBtn>
            ))}
            <span className="mx-[11px] h-[26px] w-px bg-[#adadad]" />
            <IconBtn label="Tekst poziomy" className="border border-[#99d1ff] bg-[#cce8ff]">
              <Svg><path d="M.5 1.500h15M.5 14.500h15M.5 1.500v13M15.500 1.500v13" stroke="#888" /><path d="M2.500 8V5l1-1.500h1.500l1 1.500v3M2.500 6h3.500M7.500 4.500h7M7.500 7.500h7M1.500 10h13M1.500 12.500h13" stroke="#444" strokeWidth=".9" /></Svg>
            </IconBtn>
            <IconBtn label="Tekst pionowy">
              <Svg><path d="M.5 1.500v14M3.500 1v11M7 1v14M15.500 1v14.500" stroke="#777" strokeDasharray="2 .6" /><path d="M9.500 8V4l1-1.500h2L13.500 4v4M9.500 6h4M11.500 9v6" stroke="#555" /></Svg>
            </IconBtn>
            <span className="mx-[11px] h-[26px] w-px bg-[#adadad]" />
            <Combo label="Odstępy" value="0%" disabled className="h-[26px] w-[90px]" textClass="pl-1" />
          </div>
          <div className="flex h-[61px] items-end whitespace-nowrap pl-[9px] font-['DejaVu_Sans_Condensed','Noto_Sans',sans-serif] text-[41px] leading-[51px] text-black">REMONTY MIE...</div>
        </div>
        <div className="flex gap-[10px] pb-[9px] pl-px pr-[5px] pt-[9px]">
          <button className="h-6 w-[121px] border border-[#adadad] bg-[#e1e1e1]">Zapisz jako domyślne</button>
          <button disabled className="ml-auto h-6 w-[52px] border border-[#bfbfbf] bg-[#cccccc] text-[#8a8a8a]"><Mn t="_Zastosuj" /></button>
          <button className="h-6 w-[51px] border border-[#adadad] bg-[#e1e1e1]"><Mn t="Za_mknij" /></button>
        </div>
      </div>
    </section>
  );
}

const node = (
  <g>
    <path d="M5 5l6.500 6" stroke="#000" strokeWidth="1.400" strokeDasharray="2.500 .8" />
    <path d="M11.500 7.500v4h-4z" fill="#000" />
    <circle cx="2.800" cy="2.800" r="2.300" fill="#88f" stroke="#44c" />
    <circle cx="13" cy="13" r="2.300" fill="#7b9" stroke="#275" />
  </g>
);
const gn = (x, y, r = 2) => <circle cx={x} cy={y} r={r} fill="#4a9a6a" stroke="#2a5a3c" />;
const SNAP = [
  { n: "Przyciąganie", on: true, a: node },
  null,
  { n: "Obwiednie", a: node },
  { n: "Krawędzie obwiedni", a: <path d="M13.500 1v13M1 13.500h12" stroke="#8fa894" strokeDasharray="2 1" strokeWidth="1.200" /> },
  { n: "Narożniki obwiedni", a: <g><path d="M13.500 1v10M1 13.500h10" stroke="#889a8c" strokeDasharray="2 1" />{gn(13, 13)}</g> },
  { n: "Środki krawędzi", a: <g><path d="M13.500 8v6M1 14.500h12" stroke="#333" strokeDasharray="1.500 1" />{gn(13, 5)}</g> },
  { n: "Środki obwiedni", a: <g><path d="M13.500 3v11M1 14.500h12" stroke="#333" strokeDasharray="1.500 1" />{gn(4.500, 6, 1.500)}</g> },
  null,
  { n: "Węzły", on: true, a: node },
  { n: "Ścieżki", a: <path d="M1 2c5 0 11 4 9 11l-4-1M10 13c3 0 5-2 5.500-5" stroke="#2f8a42" strokeWidth="1.400" /> },
  { n: "Przecięcia", a: <g><path d="M1 14C5 9 11 8 15 2M0 11c5 0 11-1 15-4" stroke="#888" strokeWidth="1.300" />{gn(7.500, 9)}</g> },
  { n: "Węzły ostre", on: true, a: <g><path d="M1 2c6 0 10 4 9 10M9 13c3 0 6-2 6.500-5" stroke="#889" strokeWidth="1.300" />{gn(8, 12.500, 2.300)}</g> },
  { n: "Węzły gładkie", a: <g><path d="M1 2h6c4 2 3 8 3 11M9 13c3 0 6-2 6.500-5" stroke="#7a9a80" strokeWidth="1.300" /><path d="M5 2h5v5H6z" fill="#4a9a6a" stroke="#263" /></g> },
  { n: "Środki linii", a: <g><path d="M2 15L15 2M1 11l5 4M2 9l3 6M10 1l5 5M12 0l1 7" stroke="#b33" strokeWidth="1.300" />{gn(8, 8)}</g> },
  null,
  { n: "Inne punkty", on: true, a: node },
  { n: "Środki obiektów", a: <g><path d="M13.500 2v13H1" stroke="#999" />{gn(6, 7, 1.800)}</g> },
  { n: "Środki obrotu", a: <g><path d="M13.500 1v13.500H1" stroke="#333" strokeDasharray="1.500 1" /><path d="M6 4v7M2.500 7.500h7" stroke="#333" /></g> },
  { n: "Linia bazowa tekstu", a: <g><path d="M7 1h5l4 12h-4l-.7-2.500H8L7 13H3zM9.500 4L8.500 8h2.300z" fill="#111" fillRule="evenodd" />{gn(3, 13)}</g> },
  null,
  { n: "Krawędź strony", a: <path d="M3 1.500h10v13H3z" fill="#e4e4e4" stroke="#222" strokeWidth="1.300" /> },
  { n: "Siatki", on: true, a: <path d="M2.500 0v16M6.500 0v16M10.500 0v16M14.500 0v16M0 2.500h16M0 6.500h16M0 10.500h16M0 14.500h16" stroke="#0a0ad0" strokeWidth="1.300" /> },
  { n: "Prowadnice", on: true, a: <path d="M1.500 0v16M14.500 0v16M12 1L5 15" stroke="#0a0ad0" strokeWidth="1.300" /> },
];

function SnapBar() {
  return (
    <nav aria-label="Przyciąganie" className="flex w-[30px] shrink-0 flex-col items-center bg-white pt-[2px]">
      {SNAP.map((s, i) =>
        s === null ? (
          <span key={i} className="flex h-3 items-center"><span className="h-px w-4 bg-[#a8a8a8]" /></span>
        ) : (
          <IconBtn key={i} label={s.n} className={s.on ? "border border-[#99d1ff] bg-[#cce8ff]" : ""}><Svg>{s.a}</Svg></IconBtn>
        )
      )}
    </nav>
  );
}

/* ---------- palette ---------- */

const PALETTE = (
  "000000 1a1a1a 333333 4d4d4d 666666 808080 999999 b3b3b3 cccccc e6e6e6 ececec f2f2f2 f9f9f9 ffffff " +
  "800000 ff0000 808000 ffff00 008000 00ff00 008080 00ffff 000080 0000ff 800080 ff00ff " +
  "2b0000 550000 800000 aa0000 d40000 ff0000 ff2a2a ff5555 ff8080 ffaaaa ffd5d5 280b0b 501616 782121 a02c2c c83737 d35f5f de8787 e9afaf f4d7d7 " +
  "241c1c 483737 6c5353 916f6f ac9393 c8b7b7 e3dbdb 2b1100 552200 803300 aa4400 d45500 ff6600 ff7f2a ff9955 ffb380 ffccaa ffe6d5 " +
  "28170b 502d16 784421 a05a2c c87137 d38d5f deaa87 e9c6af f4e3d7 241f1c 483e37 6c5d53 917c6f ac9d93 c8beb7 e3dedb " +
  "2b2200 554400 806600 aa8800 d4aa00 ffcc00 ffd42a ffdd55 ffe680 ffeeaa fff6d5 28220b 504416 786721 a0892c c8ab37 d3bc5f decd87 e9ddaf f4eed7 " +
  "24221c 484537 6c6753 918a6f aca793 c8c4b7 e3e2db 222b00 445500 668000 88aa00 aad400 ccff00 d4ff2a ddff55 e5ff80 eeffaa f6ffd5 " +
  "22280b 445016 677821 89a02c abc837 bcd35f cdde87 dde9af eef4d7 23241c 464837 6a6c53 8d916f a7ac93 c4c8b7 e2e3db 112b00 225500"
).split(" ");

function Palette() {
  return (
    <div className="bg-[#efefef]">
      <div className="flex border-t border-[#a0a0a0]">
        <div className="flex h-[15px] min-w-0 flex-1 overflow-hidden border-t border-black pl-px">
          <button aria-label="Brak" className="h-[14px] w-[15px] shrink-0 border border-black bg-white">
            <svg viewBox="0 0 12 12" className="h-full w-full" preserveAspectRatio="none" aria-hidden="true"><path d="M0 0l12 12M12 0L0 12" stroke="#5a0c0c" strokeWidth="1.300" /></svg>
          </button>
          {PALETTE.map((c, i) => (
            <button key={i} aria-label={`#${c}`} className="h-[14px] w-[14px] shrink-0" style={{ backgroundColor: `#${c}` }} />
          ))}
        </div>
        <button aria-label="Palety" className="flex w-[10px] justify-center pt-px">
          <svg viewBox="0 0 5 8" className="h-2 w-[5px]" aria-hidden="true"><path d="M5 0v8L0 4z" fill="#000" /></svg>
        </button>
      </div>
      <div className="h-1 border-b border-t border-b-white border-t-white" />
      <div className="flex h-[14px] items-center pl-[3px] pr-3">
        <Chevron dir="left" color="#b4b4b4" />
        <span className="ml-1 h-[14px] w-[591px] bg-[#cdcdcd]" />
        <Chevron dir="right" className="ml-auto" />
      </div>
    </div>
  );
}

function StatusBar() {
  return (
    <div className="flex h-[29px] items-center bg-[#efefef]">
      <dl className="grid w-[136px] shrink-0 grid-cols-[72px_1fr] whitespace-nowrap pl-[2px] leading-[14px]">
        <dt>Wypełnienie:</dt><dd className="text-center">Różne</dd>
        <dt>Kontur:</dt><dd className="text-center">Różne 0,324</dd>
      </dl>
      <label htmlFor="opacity" className="ml-[2px] whitespace-nowrap">K:</label>
      <span className="flex h-[21px]">
        <input id="opacity" defaultValue="0" className="h-full w-[33px] border border-l-0 border-[#adadad] bg-white outline-none" />
        <Spin />
      </span>
      <button aria-label="Widoczność warstwy" className="ml-[7px]">
        <Svg box={10} className="h-[10px] w-[10px]"><path d="M0 5c2-3 8-3 10 0-2 3-8 3-10 0z" fill="#777" stroke="#333" strokeWidth=".8" /><circle cx="5" cy="5" r="1.800" fill="#111" /><path d="M1 2l1 1M3 .8l.5 1.400M5 .5V2M7 .8l-.5 1.400M9 2L8 3M2 8l-.7 1M5 8v1.500M8 8l.7 1" stroke="#444" strokeWidth=".8" /></Svg>
      </button>
      <button aria-label="Blokada warstwy" className="ml-[9px]"><Lock open /></button>
      <Combo label="Warstwa" value="▪Layer 1" className="ml-[5px] h-[28px] w-[124px]" textClass="pl-[2px] font-bold" />
      <p className="pl-px">Wstawia tekst na ścieżkę</p>
      <div className="ml-auto flex h-full items-center border-l border-[#adadad]">
        <dl className="grid grid-cols-[16px_auto] pl-1 pr-[9px] leading-[14px]">
          <dt>X:</dt><dd className="text-right font-['Liberation_Mono',monospace] text-[12px]">-17,11</dd>
          <dt>Y:</dt><dd className="text-right font-['Liberation_Mono',monospace] text-[12px]">247,49</dd>
        </dl>
        <label htmlFor="zoom" className="w-3">Z:</label>
        <span className="flex h-[21px]">
          <input id="zoom" defaultValue="99%" className="h-full w-[45px] border border-[#adadad] bg-white pl-2 outline-none" />
          <Spin />
        </span>
      </div>
    </div>
  );
}

/* ---------- taskbar ---------- */

const APPS = [
  ["Narzędzie Wycinanie", <g key="a"><ellipse cx="10" cy="16" rx="9" ry="6" fill="#8a7f92" /><ellipse cx="12" cy="10" rx="9.500" ry="7" transform="rotate(-25 12 10)" fill="#f6f3f3" stroke="#d22" strokeWidth="1.200" /><path d="M8 14l10-8M13 5l3 11" stroke="#889" strokeWidth="1.300" /><circle cx="14.500" cy="19" r="2.500" stroke="#2e8fd0" strokeWidth="1.800" /><circle cx="20" cy="16" r="2.500" stroke="#2e8fd0" strokeWidth="1.800" /></g>, ""],
  ["Eksplorator plików", <g key="a"><path d="M2 3h8l2 3H2z" fill="#e0a01c" /><path d="M2 6h20v15H2z" fill="#fcd25e" /><path d="M6 21v-8h12v8h-3v-4H9v4z" fill="#3a95dc" /></g>, ""],
  ["Visual Studio Code", <g key="a"><path d="M17 0l6 2.500v19L17 24z" fill="#2aa9f3" /><path d="M17 0L1 15l2.500 2.500L17 7z" fill="#1d8ad6" /><path d="M17 24L1 9l2.500-2.500L17 17z" fill="#1274bd" /></g>, "mx-1"],
  ["Google Chrome", <g key="a"><circle cx="12" cy="12" r="11" fill="#fff" /><path d="M2.500 6.500A11 11 0 0 1 21.500 6.500H12A5.500 5.500 0 0 0 7 10z" fill="#ea4335" /><path d="M2.500 6.500A11 11 0 0 0 11 23l4.700-8A5.500 5.500 0 0 1 7.200 14.700z" fill="#34a853" /><path d="M21.500 6.500A11 11 0 0 1 11 23l5.700-9.200A5.500 5.500 0 0 0 14.500 6.500z" fill="#fbbc05" /><circle cx="12" cy="12" r="5.200" fill="#fff" /><circle cx="12" cy="12" r="4.200" fill="#4285f4" /></g>, "mx-1"],
  ["Word", <g key="a"><path d="M12 3h11v18H12z" fill="#fff" /><path d="M14 6h7M14 9h7M14 12h7M14 15h7M14 18h7" stroke="#2b579a" strokeWidth="1.300" /><path d="M1 3l13-2.500v23L1 21z" fill="#2b579a" /><path d="M3.500 8.500l1.500 7 2-6 2 6 1.500-7" stroke="#fff" strokeWidth="1.500" /></g>, "mx-1"],
];

function Taskbar() {
  return (
    <footer className="flex h-[39px] items-stretch bg-[linear-gradient(90deg,#1c1c26_0%,#1f1a2e_20%,#23183a_25%,#33183a_29%,#46213c_34%,#421e3c_44%,#36194a_53%,#2a1b52_59%,#27305c_65%,#261850_71%,#1f1a3a_79%,#1b1b2b_90%,#1c1d2b_100%)] text-white">
      <button aria-label="Start" className="flex w-12 shrink-0 items-center justify-center">
        <Svg className="h-4 w-4"><path d="M0 2.300L6.800 1.300V7.600H0zM7.600 1.200L16 0v7.600H7.600zM0 8.400h6.800v6.300L0 13.700zM7.600 8.400H16V16l-8.400-1.200z" fill="#fff" /></Svg>
      </button>
      <button aria-label="Szukaj" className="flex w-12 shrink-0 items-center justify-center">
        <Svg className="h-[17px] w-[17px]"><circle cx="10" cy="6" r="5" stroke="#fff" strokeWidth="1.200" /><path d="M6.500 9.500L.7 15.500" stroke="#fff" strokeWidth="1.300" /></Svg>
      </button>
      <div className="w-[725px]" />
      <div className="flex shrink-0">
        {APPS.map(([n, art, bar]) => (
          <button key={n} aria-label={n} className="flex w-[49px] flex-col items-stretch">
            <span className="flex flex-1 items-center justify-center"><Svg box={24} className="h-6 w-6">{art}</Svg></span>
            {bar ? <span className={`h-[2px] bg-[#76b9ed] ${bar}`} /> : <span className="h-[2px]" />}
          </button>
        ))}
        <button aria-label="Inkscape" className="flex w-12 flex-col items-stretch bg-white/20">
          <span className="flex flex-1 items-center justify-center"><InkscapeLogo className="h-6 w-6" /></span>
          <span className="h-[2px] bg-[#76b9ed]" />
        </button>
      </div>
      <div className="ml-auto flex items-center justify-end">
        <button aria-label="Ukryte ikony" className="mr-[10px]"><Svg box={12} className="h-3 w-3"><path d="M1 9l5-5.500L11 9" stroke="#fff" strokeWidth="1.300" /></Svg></button>
        <button aria-label="Sieć" className="mr-2"><Svg className="h-4 w-4"><path d="M4 2.500h11.500v8.500H4M.5 1.500h4v4h-4zM2.500 5.500V12M9.500 11v3M6 14.500h7" stroke="#fff" /></Svg></button>
        <button aria-label="Głośność" className="mr-[10px]"><Svg className="h-4 w-4"><path d="M1 5.500h2.500L7.500 2v12l-4-3.500H1z" stroke="#fff" strokeWidth="1.200" /><path d="M10 5.500l5 5M15 5.500l-5 5" stroke="#fff" strokeWidth="1.300" /></Svg></button>
        <time className="w-[54px] whitespace-nowrap text-center leading-[17px]">13:44<br />04.11.2021</time>
        <button aria-label="Powiadomienia" className="relative ml-[18px] mr-[19px]">
          <Svg className="h-[18px] w-[18px]"><path d="M1 1h14v11h-4l-3.500 3V12H1z" fill="#fff" /><path d="M3.500 4h9M3.500 6.500h9M3.500 9h6" stroke="#1c1d2b" /></Svg>
          <span className="absolute -bottom-2 -right-2 flex h-4 w-4 items-center justify-center rounded-full border border-[#999] bg-[#2b2b33] text-[10px] leading-none">3</span>
        </button>
        <span className="mr-[2px] h-full w-px bg-[#55566a]" />
      </div>
    </footer>
  );
}

export default function App() {
  return (
    <div className={`flex h-screen w-full flex-col overflow-hidden bg-[#efefef] text-[11px] leading-[14px] text-black ${SEGOE}`}>
      <Header />
      <CommandBar />
      <ToolControls />
      <div className="flex min-h-0 flex-1">
        <Toolbox />
        <Workspace />
        <aside className="w-[334px] shrink-0 border-l border-[#a0a0a0] bg-[#efefef]">
          <div className="h-full border-l border-black">
            <div className="mt-px border-t border-black" />
            <div className="pr-[2px]">
              <ObjectProperties />
              <TextAndFont />
            </div>
          </div>
        </aside>
        <SnapBar />
      </div>
      <Palette />
      <StatusBar />
      <Taskbar />
    </div>
  );
}
